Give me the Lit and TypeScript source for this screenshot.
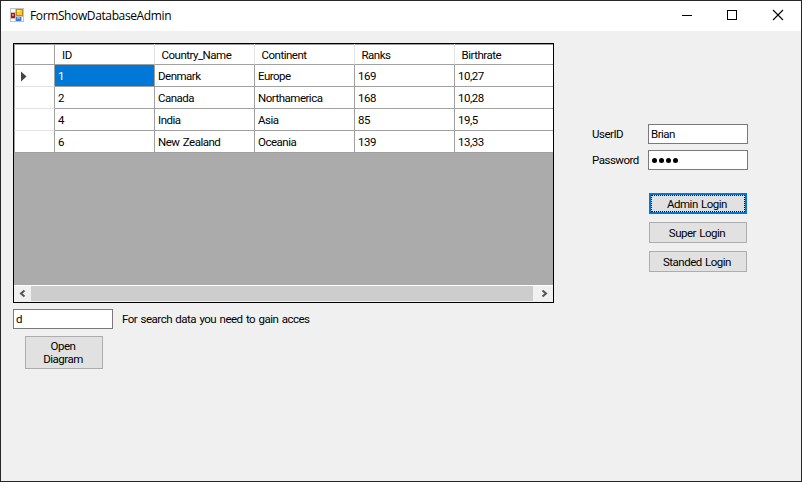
import { LitElement, html, css } from "lit";
import { customElement } from "lit/decorators.js";

const COLUMNS = ["ID", "Country_Name", "Continent", "Ranks", "Birthrate"];
const ROWS = [
  ["1", "Denmark", "Europe", "169", "10,27"],
  ["2", "Canada", "Northamerica", "168", "10,28"],
  ["4", "India", "Asia", "85", "19,5"],
  ["6", "New Zealand", "Oceania", "139", "13,33"],
];

@customElement("title-bar")
class TitleBar extends LitElement {
  static styles = css`
    :host {
      display: flex;
      height: 30px;
      background: #fff;
      color: #000;
      font: 12px/30px "Open Sans", sans-serif;
      word-spacing: 0;
    }
    .app-icon { margin: 7px 6px 0 9px; width: 14px; height: 14px; flex: none; }
    .title { flex: 1; letter-spacing: -0.38px; white-space: nowrap; }
    .control { width: 46px; height: 30px; flex: none; }
    svg { display: block; }
  `;
  render() {
    return html`
      <svg class="app-icon" viewBox="0 0 14 14" shape-rendering="crispEdges">
        <rect width="14" height="14" fill="#c3c3c3" />
        <rect x="1" y="1" width="4" height="3" fill="#fff" />
        <rect x="1" y="11" width="4" height="2" fill="#fff" />
        <rect x="12" y="9" width="1" height="4" fill="#fff" />
        <rect x="1" y="5" width="4" height="5" fill="#a51c12" />
        <rect x="2" y="6" width="2" height="2" fill="#e87868" />
        <rect x="6" y="1" width="7" height="7" fill="#c48a10" />
        <rect x="7" y="2" width="5" height="5" fill="#fbc936" />
        <rect x="7" y="2" width="3" height="2" fill="#ffe58c" />
        <rect x="6" y="9" width="5" height="4" fill="#3f78d8" />
        <rect x="7" y="9" width="3" height="2" fill="#7fb0f5" />
      </svg>
      <span class="title">FormShowDatabaseAdmin</span>
      <svg class="control" viewBox="0 0 46 30" shape-rendering="crispEdges"><rect x="19" y="14" width="10" height="1" /></svg>
      <svg class="control" viewBox="0 0 46 30" shape-rendering="crispEdges"><rect x="18.5" y="9.5" width="9" height="9" fill="none" stroke="#000" /></svg>
      <svg class="control" viewBox="0 0 46 30"><path d="M18 9L28 19M28 9L18 19" stroke="#000" stroke-width="1.1" /></svg>
    `;
  }
}

@customElement("data-grid")
class DataGrid extends LitElement {
  static styles = css`
    :host {
      display: flex;
      flex-direction: column;
      box-sizing: border-box;
      width: 541px;
      height: 260px;
      border: 1px solid #000;
      background: #ababab;
      overflow: hidden;
    }
    .row {
      display: grid;
      grid-template-columns: 41px repeat(4, 100px) 99px;
      grid-template-rows: 100%;
      height: 22px;
      flex: none;
      background: #fff;
    }
    .row.header { height: 21px; box-shadow: inset 0 1px #a0a0a0; }
    .cell {
      box-sizing: border-box;
      border-right: 1px solid #a0a0a0;
      border-bottom: 1px solid #a0a0a0;
      padding-left: 3px;
      line-height: 22px;
      white-space: nowrap;
    }
    .cell:last-child { border-right: 0; }
    .header .cell { padding-left: 6.5px; line-height: 23px; border-right-color: #e3e3e3; }
    .header .cell:nth-child(2) { padding-left: 7px; }
    .cell.row-head, .header .cell.row-head { border-right-color: #a0a0a0; }
    .cell.row-head { border-bottom-color: #e3e3e3; padding-left: 6px; border-left: 1px solid #a0a0a0; }
    .header .row-head, .row:nth-child(5) .row-head { border-bottom-color: #a0a0a0; }
    .selected { background: #0078d7; color: #fff; }
    .marker { display: block; margin-top: 6px; }
    .filler { flex: 1; }
    .scroll {
      display: flex;
      height: 16px;
      padding-bottom: 1px;
      background: #f0f0f0;
      box-shadow: inset 0 1px #fff;
    }
    .arrow { width: 17px; height: 17px; flex: none; }
    .arrow.right { width: 20px; }
    .thumb { flex: 1; margin-top: 1px; background: #cdcdcd; }
  `;
  render() {
    return html`
      <div class="row header">
        <div class="cell row-head"></div>
        ${COLUMNS.map((c) => html`<div class="cell">${c}</div>`)}
      </div>
      ${ROWS.map(
        (r, i) => html`<div class="row">
          <div class="cell row-head">
            ${i === 0
              ? html`<svg class="marker" width="6" height="11" viewBox="0 0 6 11"><path d="M0 .5L5.5 5.5L0 10.5Z" fill="#444" /></svg>`
              : ""}
          </div>
          ${r.map((v, j) => html`<div class="cell ${i === 0 && j === 0 ? "selected" : ""}">${v}</div>`)}
        </div>`
      )}
      <div class="filler"></div>
      <div class="scroll">
        <svg class="arrow" viewBox="0 0 17 17"><path d="M10.5 5.5L7 8.5L10.5 11.5" fill="none" stroke="#555" stroke-width="2" /></svg>
        <div class="thumb"></div>
        <svg class="arrow right" viewBox="0 0 20 17"><path d="M9.5 5.5L13 8.5L9.5 11.5" fill="none" stroke="#555" stroke-width="2" /></svg>
      </div>
    `;
  }
}

@customElement("app-root")
class AppRoot extends LitElement {
  static styles = css`
    :host {
      display: flex;
      flex-direction: column;
      box-sizing: border-box;
      width: 802px;
      height: 482px;
      border: 1px solid #262626;
      background: #f0f0f0;
      color: #000;
      font: 11.5px/13px Roboto, "Liberation Sans", sans-serif;
      letter-spacing: -0.5px;
      word-spacing: 1px;
      overflow: hidden;
    }
    .body { display: flex; padding: 12px 0 0 12px; }
    .left { width: 541px; }
    .search { display: flex; align-items: center; gap: 9px; margin-top: 6px; }
    .field {
      box-sizing: border-box;
      width: 100px;
      height: 20px;
      padding: 0 2px;
      border: 1px solid #7a7a7a;
      background: #fff;
      line-height: 18px;
    }
    .button {
      display: flex;
      align-items: center;
      justify-content: center;
      box-sizing: border-box;
      width: 98px;
      height: 21px;
      padding: 1px 2px 0 0;
      border: 1px solid #adadad;
      background: #e1e1e1;
      text-align: center;
    }
    .button.focused { border: 2px solid #0078d7; outline: 1px dotted #000; outline-offset: -3px; }
    .button.open { width: 78px; height: 33px; margin: 7px 0 0 12px; padding: 0 2px 0 0; }
    .right { margin: 81px 0 0 38px; }
    .form { display: grid; grid-template-columns: 56px 100px; row-gap: 6px; line-height: 20px; }
    .dots { display: flex; align-items: center; gap: 2px; padding: 1px 0 0 3px; }
    .dot { width: 5px; height: 5px; border-radius: 50%; background: #000; }
    .buttons { display: grid; gap: 8px; margin: 23px 0 0 57px; }
  `;
  render() {
    return html`
      <title-bar></title-bar>
      <div class="body">
        <div class="left">
          <data-grid></data-grid>
          <div class="search">
            <div class="field">d</div>
            <span>For search data you need to gain acces</span>
          </div>
          <div class="button open">Open<br />Diagram</div>
        </div>
        <div class="right">
          <div class="form">
            <span>UserID</span>
            <div class="field">Brian</div>
            <span>Password</span>
            <div class="field dots">${[0, 1, 2, 3].map(() => html`<i class="dot"></i>`)}</div>
          </div>
          <div class="buttons">
            <div class="button focused">Admin Login</div>
            <div class="button">Super Login</div>
            <div class="button">Standed Login</div>
          </div>
        </div>
      </div>
    `;
  }
}
